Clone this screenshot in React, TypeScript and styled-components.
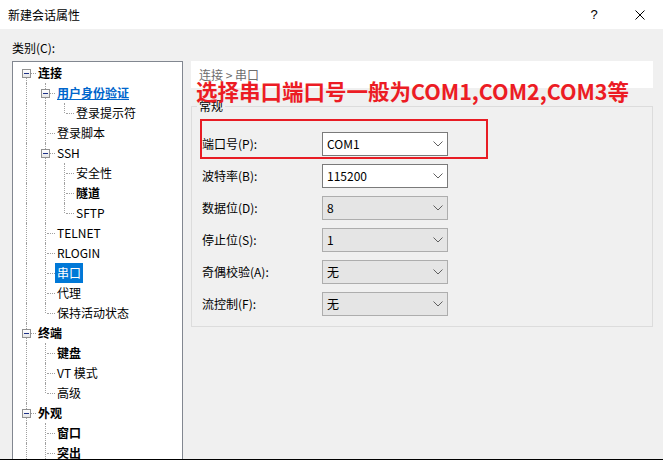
import React from 'react';
import styled, { createGlobalStyle } from 'styled-components';

const GlobalStyle = createGlobalStyle`
  html, body {
    margin: 0;
    padding: 0;
    background: #f0f0f0;
  }
  * {
    box-sizing: border-box;
  }
`;

const FONT = `'Noto Sans CJK SC', 'Liberation Sans', sans-serif`;

const Window = styled.div`
  position: relative;
  width: 663px;
  height: 460px;
  overflow: hidden;
  display: flex;
  flex-direction: column;
  font-family: ${FONT};
  font-size: 12px;
  color: #000;
  background: #f0f0f0;
  border-bottom: 1px solid #000;
`;

const TitleBar = styled.div`
  height: 29px;
  flex: none;
  display: flex;
  align-items: center;
  background: #fff;
  padding-left: 8px;
`;

const Title = styled.div`
  flex: 1;
  line-height: 16px;
`;

const TitleButton = styled.div`
  width: 46px;
  height: 29px;
  display: flex;
  align-items: center;
  justify-content: center;
  font-family: 'Liberation Sans', sans-serif;
  font-size: 13px;
`;

const Body = styled.div`
  flex: 1;
  min-height: 0;
  display: flex;
  padding: 0 10px 0 12px;
  gap: 8px;
`;

const LeftCol = styled.div`
  width: 171px;
  display: flex;
  flex-direction: column;
`;

const CategoryLabel = styled.div`
  height: 32px;
  padding-top: 11px;
  line-height: 16px;
`;

const Tree = styled.div`
  flex: 1;
  min-height: 0;
  overflow: hidden;
  background: #fff;
  border: 1px solid #828790;
  border-bottom: none;
  padding: 1px 0 0 4px;
`;

const Row = styled.div`
  height: 20px;
  display: flex;
  align-items: center;
`;

const Cell = styled.span<{ $top?: boolean; $bottom?: boolean; $h?: boolean }>`
  position: relative;
  width: 19px;
  height: 20px;
  flex: none;

  &::before {
    content: '';
    position: absolute;
    left: 9px;
    top: ${(p) => (p.$top ? '0' : '10px')};
    height: ${(p) => (p.$top && p.$bottom ? '20px' : p.$top || p.$bottom ? '10px' : '0')};
    border-left: 1px dotted #a0a0a0;
  }

  &::after {
    content: '';
    display: ${(p) => (p.$h ? 'block' : 'none')};
    position: absolute;
    left: 11px;
    top: 10px;
    width: 8px;
    border-top: 1px dotted #a0a0a0;
  }
`;

const Expander = styled.span`
  position: absolute;
  left: 5px;
  top: 6px;
  width: 9px;
  height: 9px;
  border: 1px solid #919191;
  background: linear-gradient(#fff, #e6e6e6);
  z-index: 1;

  &::after {
    content: '';
    position: absolute;
    left: 1px;
    top: 3px;
    width: 5px;
    height: 1px;
    background: #1e3287;
  }
`;

const NodeLabel = styled.span<{ $bold?: boolean; $hot?: boolean; $selected?: boolean }>`
  height: 20px;
  line-height: 20px;
  padding: 0 2px;
  white-space: nowrap;
  font-weight: ${(p) => (p.$bold || p.$hot ? 700 : 400)};
  color: ${(p) => (p.$selected ? '#fff' : p.$hot ? '#0066cc' : '#000')};
  background: ${(p) => (p.$selected ? '#0078d7' : 'transparent')};
  text-decoration: ${(p) => (p.$hot ? 'underline' : 'none')};
`;

const RightCol = styled.div`
  flex: 1;
  display: flex;
  flex-direction: column;
  padding-top: 32px;
`;

const Header = styled.div`
  height: 27px;
  background: #fff;
  padding-left: 8px;
  display: flex;
  align-items: center;
  color: #6d6d6d;
  white-space: pre;
`;

const Group = styled.fieldset`
  margin: 10px 0 0 0;
  padding: 18px 10px 10px 10px;
  border: 1px solid #dcdcdc;
  min-width: 0;
  display: flex;
  flex-direction: column;
  gap: 8px;
`;

const Legend = styled.legend`
  margin-left: -5px;
  padding: 0 2px;
  line-height: 16px;
`;

const FieldRow = styled.div`
  display: flex;
  align-items: center;
  height: 24px;
`;

const FieldLabel = styled.div`
  width: 120px;
  line-height: 16px;
`;

const Combo = styled.div<{ $editable?: boolean }>`
  width: 126px;
  height: 24px;
  display: flex;
  align-items: center;
  padding: 0 4px 0 4px;
  background: ${(p) => (p.$editable ? '#fff' : '#e5e5e5')};
  border: 1px solid ${(p) => (p.$editable ? '#7a7a7a' : '#adadad')};
`;

const ComboValue = styled.span`
  flex: 1;
  line-height: 16px;
`;

const Annotation = styled.div`
  position: absolute;
  left: 196px;
  top: 80px;
  font-size: 21.5px;
  line-height: 22px;
  font-weight: 700;
  color: #ec1c24;
  white-space: nowrap;
`;

const RedFrame = styled.div`
  position: absolute;
  left: 200px;
  top: 119px;
  width: 288px;
  height: 40px;
  border: 2px solid #e81c24;
`;

type Node = {
  label: string;
  level: number;
  bold?: boolean;
  expand?: boolean;
  hot?: boolean;
  selected?: boolean;
};

const nodes: Node[] = [
  { label: '连接', level: 0, bold: true, expand: true },
  { label: '用户身份验证', level: 1, expand: true, hot: true },
  { label: '登录提示符', level: 2 },
  { label: '登录脚本', level: 1 },
  { label: 'SSH', level: 1, expand: true },
  { label: '安全性', level: 2 },
  { label: '隧道', level: 2, bold: true },
  { label: 'SFTP', level: 2 },
  { label: 'TELNET', level: 1 },
  { label: 'RLOGIN', level: 1 },
  { label: '串口', level: 1, selected: true },
  { label: '代理', level: 1 },
  { label: '保持活动状态', level: 1 },
  { label: '终端', level: 0, bold: true, expand: true },
  { label: '键盘', level: 1, bold: true },
  { label: 'VT 模式', level: 1 },
  { label: '高级', level: 1 },
  { label: '外观', level: 0, bold: true, expand: true },
  { label: '窗口', level: 1, bold: true },
  { label: '突出', level: 1, bold: true },
];

// the list is cut off at the bottom, so running off the end counts as "more siblings"
const hasNext = (i: number) => {
  const lvl = nodes[i].level;
  for (let j = i + 1; j < nodes.length; j++) {
    if (nodes[j].level < lvl) return false;
    if (nodes[j].level === lvl) return true;
  }
  return true;
};

const ancestorContinues = (i: number, col: number) => {
  for (let j = i - 1; j >= 0; j--) {
    if (nodes[j].level === col) return hasNext(j);
  }
  return false;
};

const Chevron = () => (
  <svg width="10" height="6" viewBox="0 0 10 6">
    <path d="M0.5 0.5 L5 5 L9.5 0.5" fill="none" stroke="#606060" strokeWidth="1" />
  </svg>
);

const CloseIcon = () => (
  <svg width="10" height="10" viewBox="0 0 10 10">
    <path d="M0.5 0.5 L9.5 9.5 M9.5 0.5 L0.5 9.5" stroke="#000" strokeWidth="1" />
  </svg>
);

const fields = [
  { label: '端口号(P):', value: 'COM1', editable: true },
  { label: '波特率(B):', value: '115200', editable: true },
  { label: '数据位(D):', value: '8' },
  { label: '停止位(S):', value: '1' },
  { label: '奇偶校验(A):', value: '无' },
  { label: '流控制(F):', value: '无' },
];

const App = () => {
  return (
    <>
      <GlobalStyle />
      <Window>
        <TitleBar>
          <Title>新建会话属性</Title>
          <TitleButton>?</TitleButton>
          <TitleButton>
            <CloseIcon />
          </TitleButton>
        </TitleBar>
        <Body>
          <LeftCol>
            <CategoryLabel>类别(C):</CategoryLabel>
            <Tree>
              {nodes.map((n, i) => (
                <Row key={n.label}>
                  {Array.from({ length: n.level }).map((_, c) => {
                    const on = ancestorContinues(i, c);
                    return <Cell key={c} $top={on} $bottom={on} />;
                  })}
                  <Cell $top={i !== 0} $bottom={hasNext(i)} $h>
                    {n.expand && <Expander />}
                  </Cell>
                  <NodeLabel $bold={n.bold} $hot={n.hot} $selected={n.selected}>
                    {n.label}
                  </NodeLabel>
                </Row>
              ))}
            </Tree>
          </LeftCol>
          <RightCol>
            <Header>连接 &gt; 串口</Header>
            <Group>
              <Legend>常规</Legend>
              {fields.map((f) => (
                <FieldRow key={f.label}>
                  <FieldLabel>{f.label}</FieldLabel>
                  <Combo $editable={f.editable}>
                    <ComboValue>{f.value}</ComboValue>
                    <Chevron />
                  </Combo>
                </FieldRow>
              ))}
            </Group>
          </RightCol>
        </Body>
        <Annotation>选择串口端口号一般为COM1,COM2,COM3等</Annotation>
        <RedFrame />
      </Window>
    </>
  );
};

export default App;
